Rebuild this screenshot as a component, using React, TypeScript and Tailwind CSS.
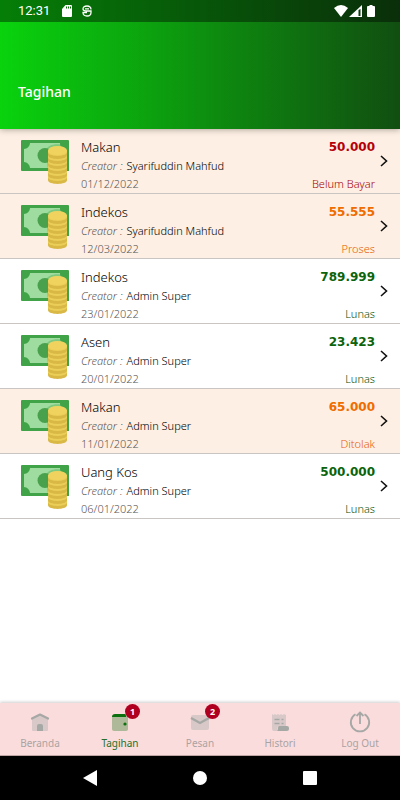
import React from "react";

type Tone = "unpaid" | "pending" | "paid";

type Bill = {
  title: string;
  creator: string;
  date: string;
  amount: string;
  status: string;
  tone: Tone;
};

const bills: Bill[] = [
  { title: "Makan", creator: "Syarifuddin Mahfud", date: "01/12/2022", amount: "50.000", status: "Belum Bayar", tone: "unpaid" },
  { title: "Indekos", creator: "Syarifuddin Mahfud", date: "12/03/2022", amount: "55.555", status: "Proses", tone: "pending" },
  { title: "Indekos", creator: "Admin Super", date: "23/01/2022", amount: "789.999", status: "Lunas", tone: "paid" },
  { title: "Asen", creator: "Admin Super", date: "20/01/2022", amount: "23.423", status: "Lunas", tone: "paid" },
  { title: "Makan", creator: "Admin Super", date: "11/01/2022", amount: "65.000", status: "Ditolak", tone: "pending" },
  { title: "Uang Kos", creator: "Admin Super", date: "06/01/2022", amount: "500.000", status: "Lunas", tone: "paid" },
];

const toneText: Record<Tone, string> = {
  unpaid: "text-[#b50009]",
  pending: "text-[#ef6c00]",
  paid: "text-[#0b640b]",
};

const toneStatus: Record<Tone, string> = {
  unpaid: "text-[#a80008]",
  pending: "text-[#e65c00]",
  paid: "text-[#05500a]",
};

const toneRow: Record<Tone, string> = {
  unpaid: "bg-[#fdefe3]",
  pending: "bg-[#fdefe3]",
  paid: "bg-white",
};

function MoneyIcon() {
  const coins = [35, 30, 25, 20, 15, 10];
  return (
    <svg width="48" height="46" viewBox="0 0 48 46" aria-hidden="true" className="shrink-0">
      <rect width="48" height="31" rx="1" fill="#41a348" />
      <path d="M9 3h30c0 3 3 6 6 6v13c-3 0-6 3-6 6H9c0-3-3-6-6-6V9c3 0 6-3 6-6z" fill="#9fdc9f" />
      <circle cx="24" cy="15.500" r="7.500" fill="#4aa14d" />
      <path d="M25 10c2-7 18-8 21-1v22H27z" fill="#41a348" opacity=".35" />
      <path d="M39 3h9v28h-3V9c-3 0-6-3-6-6z" fill="#41a348" />
      {coins.map((y) => (
        <g key={y}>
          <path d={`M27 ${y}v5c0 5.200 19 5.200 19 0v-5z`} fill="#d9b845" />
          <path d={`M27 ${y}v2c0 5.200 19 5.200 19 0v-2z`} fill="#eace58" />
        </g>
      ))}
      <ellipse cx="36.500" cy="10.500" rx="9.500" ry="4.500" fill="#f0d35e" />
    </svg>
  );
}

function Chevron() {
  return (
    <svg width="8" height="12" viewBox="0 0 8 12" fill="none" stroke="#111" strokeWidth="1.600" aria-hidden="true">
      <path d="M1 1l5.500 5L1 11" />
    </svg>
  );
}

function BillRow({ bill }: { bill: Bill }) {
  return (
    <li>
      <button type="button" className={`flex w-full border-b border-[#c9c5c3] pl-[21px] pr-3 text-left ${toneRow[bill.tone]}`}>
        <span className="pt-[11px]">
          <MoneyIcon />
        </span>
        <span className="ml-3 flex flex-1 flex-col pt-2 text-[11px] leading-[18px] font-light">
          <span className="text-[13px] leading-5 text-black">{bill.title}</span>
          <span className="flex gap-1 text-black">
            <i className="text-[#5a5654]">Creator :</i>
            <span>{bill.creator}</span>
          </span>
          <span className="text-[#5a5654]">{bill.date}</span>
        </span>
        <span className="flex flex-col justify-between pt-2 text-right">
          <span className={`font-['DejaVu_Sans',sans-serif] text-[12px] leading-5 font-bold ${toneText[bill.tone]}`}>{bill.amount}</span>
          <span className={`text-[11px] leading-[18px] font-light ${toneStatus[bill.tone]}`}>{bill.status}</span>
        </span>
        <span className="ml-[5px] self-center">
          <Chevron />
        </span>
      </button>
    </li>
  );
}

function HomeIcon() {
  return (
    <svg width="20" height="20" viewBox="0 0 20 20" aria-hidden="true">
      <path d="M10 3l8 4v11q0 1-1 1H3q-1 0-1-1V7z" fill="#d9c8c8" />
      <path d="M2 6.500L10 2.500l8 4" fill="none" stroke="#a6a8a6" strokeWidth="2.200" strokeLinecap="round" strokeLinejoin="round" />
      <path d="M7 19v-5q0-2 2-2h2q2 0 2 2v5z" fill="#a6a8a6" />
    </svg>
  );
}

function WalletIcon() {
  return (
    <svg width="20" height="20" viewBox="0 0 20 20" aria-hidden="true">
      <rect x="2" y="3" width="16" height="16" rx="2" fill="#adb998" />
      <path d="M2 5q0-3 3-3h10q1 0 1 2v1z" fill="#0b700d" />
      <circle cx="15" cy="12" r="1.600" fill="#0b700d" />
    </svg>
  );
}

function MailIcon() {
  return (
    <svg width="20" height="20" viewBox="0 0 20 20" aria-hidden="true">
      <rect x="1" y="3" width="18" height="15" rx="2" fill="#d9c8c8" />
      <path d="M1 6l9 5 9-5" fill="none" stroke="#a6a8a6" strokeWidth="2.400" />
    </svg>
  );
}

function HistoryIcon() {
  return (
    <svg width="20" height="20" viewBox="0 0 20 20" aria-hidden="true">
      <path d="M2 2l1.500 1L5 2l1.500 1L8 2l1.500 1L11 2l1.500 1L14 2l2 1v11H8l-1 5H4q-2 0-2-2z" fill="#d9c8c8" />
      <path d="M4.500 7.500h5M4.500 11.500h5M11.500 7.500h2M11.500 11.500h2" stroke="#a6a8a6" strokeWidth="1.500" />
      <path d="M9 14h8q2 0 2 2v1q0 2-2 2H7q1-1 1-3 0-2 1-2z" fill="#a6a8a6" />
    </svg>
  );
}

function LogoutIcon() {
  return (
    <svg width="22" height="22" viewBox="0 0 22 22" fill="none" stroke="#a6a8a6" strokeWidth="1.800" aria-hidden="true">
      <path d="M6.500 3.200a9.200 9.200 0 109 0M11 13V2M7.500 5L11 1.500 14.500 5" />
    </svg>
  );
}

const tabs = [
  { label: "Beranda", icon: <HomeIcon /> },
  { label: "Tagihan", icon: <WalletIcon />, badge: 1, active: true },
  { label: "Pesan", icon: <MailIcon />, badge: 2 },
  { label: "Histori", icon: <HistoryIcon /> },
  { label: "Log Out", icon: <LogoutIcon /> },
];

function StatusBar() {
  return (
    <div className="flex h-[22px] items-center bg-black/40 pl-[18px] pr-[25px] text-white">
      <span className="font-[Roboto,sans-serif] text-[13px] leading-4">12:31</span>
      <svg width="10" height="12" viewBox="0 0 10 12" className="ml-3" aria-hidden="true">
        <path d="M3.500 0H9q1 0 1 1v10q0 1-1 1H1q-1 0-1-1V4z" fill="#fff" />
        <path d="M4.500 1.500v2M6.500 1.500v2M8.500 1.500v2" stroke="#087009" />
      </svg>
      <svg width="10" height="12" viewBox="0 0 10 12" fill="none" stroke="#fff" strokeWidth="1.300" className="ml-[10px]" aria-hidden="true">
        <path d="M9 4.500Q9 1 5 1T1 4q0 2 4 2h4v1.500Q9 11 5 11T1 7.500h4M3 3.800h4" />
      </svg>
      <span className="ml-auto flex items-center">
        <svg width="14" height="12" viewBox="0 0 14 12" aria-hidden="true">
          <path d="M0 3q7-6 14 0L7 12z" fill="#fff" />
        </svg>
        <svg width="13" height="12" viewBox="0 0 13 12" className="ml-[1px]" aria-hidden="true">
          <path d="M0 12L13 0v12z" fill="#fff" />
          <path d="M9.500 5v6h2V4z" fill="#0a3d0c" />
        </svg>
        <svg width="8" height="12" viewBox="0 0 8 12" className="ml-[5px]" aria-hidden="true">
          <path d="M2.500 0h3v1H7q1 0 1 1v9q0 1-1 1H1q-1 0-1-1V2q0-1 1-1h1.500z" fill="#fff" />
        </svg>
      </span>
    </div>
  );
}

export default function App() {
  return (
    <div className="flex min-h-screen flex-col bg-white font-['Noto_Sans','Open_Sans',sans-serif]">
      <header className="relative flex h-[129px] flex-col bg-[linear-gradient(to_right,#09d30d,#114e11)] shadow-[0_1px_6px_rgba(0,0,0,0.3)]">
        <StatusBar />
        <h1 className="mt-auto mb-[27px] pl-[18px] text-[14px] leading-5 font-medium text-white">Tagihan</h1>
      </header>
      <main className="flex-1">
        <ul>
          {bills.map((bill) => (
            <BillRow key={bill.date} bill={bill} />
          ))}
        </ul>
      </main>
      <nav className="grid grid-cols-5 border-b border-[#bfa4a4] bg-[#fbdcdc] shadow-[0_-1px_3px_rgba(0,0,0,0.2)]">
        {tabs.map((tab) => (
          <button
            key={tab.label}
            type="button"
            className={`flex h-[52px] flex-col items-center text-[10px] leading-4 ${tab.active ? "text-[#26702a]" : "text-[#aaa3a3]"}`}
          >
            <span className="relative mt-2 flex h-[22px] items-center">
              {tab.icon}
              {tab.badge && (
                <span className="absolute -top-[7px] left-[15px] flex size-[15px] items-center justify-center rounded-full bg-[#b00020] text-[9px] font-bold text-white">
                  {tab.badge}
                </span>
              )}
            </span>
            <span className="mt-[2px]">{tab.label}</span>
          </button>
        ))}
      </nav>
      <div className="flex h-11 items-center justify-between bg-black px-[83px]">
        <button type="button" aria-label="Back">
          <svg width="14" height="16" viewBox="0 0 14 16" aria-hidden="true">
            <path d="M14 0v16L0 8z" fill="#fff" />
          </svg>
        </button>
        <button type="button" aria-label="Home" className="size-[14px] rounded-full bg-white" />
        <button type="button" aria-label="Recent apps" className="size-[14px] rounded-[1px] bg-white" />
      </div>
    </div>
  );
}
